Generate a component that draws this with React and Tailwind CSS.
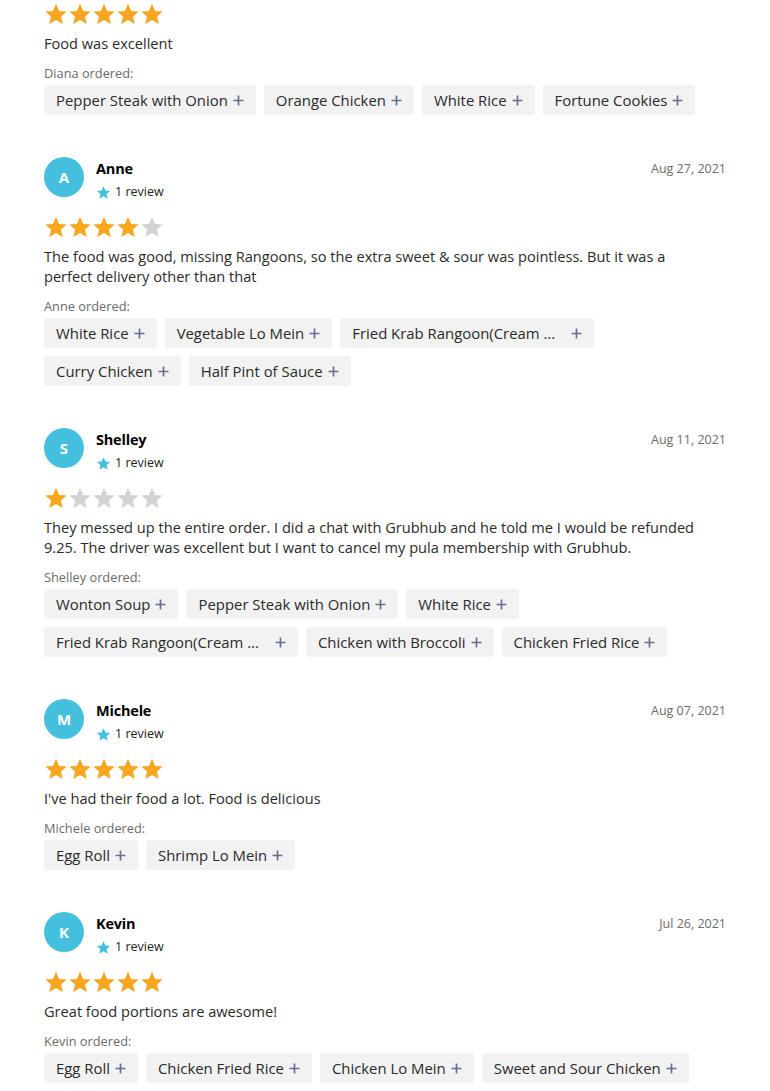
import React from "react";

const reviews = [
  {
    name: "Diana",
    hideHeader: true,
    rating: 5,
    text: "Food was excellent",
    rows: [["Pepper Steak with Onion", "Orange Chicken", "White Rice", "Fortune Cookies"]],
  },
  {
    name: "Anne",
    date: "Aug 27, 2021",
    rating: 4,
    text: "The food was good, missing Rangoons, so the extra sweet & sour was pointless. But it was a perfect delivery other than that",
    rows: [
      ["White Rice", "Vegetable Lo Mein", "Fried Krab Rangoon(Cream ...|"],
      ["Curry Chicken", "Half Pint of Sauce"],
    ],
  },
  {
    name: "Shelley",
    date: "Aug 11, 2021",
    rating: 1,
    text: "They messed up the entire order. I did a chat with Grubhub and he told me I would be refunded 9.25. The driver was excellent but I want to cancel my pula membership with Grubhub.",
    rows: [
      ["Wonton Soup", "Pepper Steak with Onion", "White Rice"],
      ["Fried Krab Rangoon(Cream ...|", "Chicken with Broccoli", "Chicken Fried Rice"],
    ],
  },
  {
    name: "Michele",
    date: "Aug 07, 2021",
    rating: 5,
    text: "I've had their food a lot. Food is delicious",
    rows: [["Egg Roll", "Shrimp Lo Mein"]],
  },
  {
    name: "Kevin",
    date: "Jul 26, 2021",
    rating: 5,
    text: "Great food portions are awesome!",
    rows: [["Egg Roll", "Chicken Fried Rice", "Chicken Lo Mein", "Sweet and Sour Chicken"]],
  },
];

function Star({ color, size = 24 }) {
  return (
    <svg width={size} height={size} viewBox="0 0 24 24" className="block">
      <path
        d="M12 1.8l3.1 7.1 7.6.6-5.8 5 1.8 7.5L12 18l-6.7 4 1.8-7.5-5.8-5 7.6-.6z"
        fill={color}
      />
    </svg>
  );
}

function Plus() {
  return (
    <svg width="11" height="11" viewBox="0 0 11 11" className="block">
      <path d="M5.5 0.5v10M0.5 5.5h10" stroke="#6b6f8e" strokeWidth="1.7" />
    </svg>
  );
}

function Chip({ label }) {
  const trunc = label.endsWith("|");
  const text = trunc ? label.slice(0, -1) : label;
  return (
    <div className="flex h-[30px] items-center rounded-[3px] bg-[#f2f2f2] pl-3 pr-3 text-[14.9px] text-[#2b2b2b]">
      <span>{text}</span>
      <span className={trunc ? "ml-[16px]" : "ml-[5px]"}>
        <Plus />
      </span>
    </div>
  );
}

function Review({ r }) {
  return (
    <div className="mb-[42px]">
      {!r.hideHeader && (
        <div className="flex items-start justify-between">
          <div className="flex">
            <div className="flex h-10 w-10 items-center justify-center rounded-full bg-[#44bfde] text-[15px] font-bold text-white">
              {r.name[0]}
            </div>
            <div className="ml-3 pt-[2px]">
              <div className="text-[14.5px] font-bold leading-5 text-black tracking-[-0.2px]">{r.name}</div>
              <div className="mt-[5px] flex items-center text-[12.5px] leading-4 text-[#222]">
                <Star color="#44bfde" size={15} />
                <span className="ml-[4px]">1 review</span>
              </div>
            </div>
          </div>
          <div className="pt-[4px] text-[12.5px] leading-4 text-[#6b6b6b]">{r.date}</div>
        </div>
      )}
      <div className={`flex ${r.hideHeader ? "mt-0" : "mt-[15px]"}`}>
        {[0, 1, 2, 3, 4].map((i) => (
          <Star key={i} color={i < r.rating ? "#f8a51f" : "#d3d3d3"} />
        ))}
      </div>
      <p className="mt-[7px] max-w-[664px] text-[14.6px] leading-5 text-[#2b2b2b]">{r.text}</p>
      <div className="mt-[12px] text-[12.8px] leading-4 text-[#6b6b6b]">{r.name} ordered:</div>
      <div className="mt-[4px] flex flex-col gap-2">
        {r.rows.map((row, i) => (
          <div key={i} className="flex gap-2">
            {row.map((c, j) => (
              <Chip key={j} label={c} />
            ))}
          </div>
        ))}
      </div>
    </div>
  );
}

export default function App() {
  return (
    <div
      className="min-h-[1091px] bg-white px-[44px] pt-[2px]"
      style={{ fontFamily: '"Open Sans", "Noto Sans", sans-serif' }}
    >
      {reviews.map((r, i) => (
        <Review key={i} r={r} />
      ))}
    </div>
  );
}
